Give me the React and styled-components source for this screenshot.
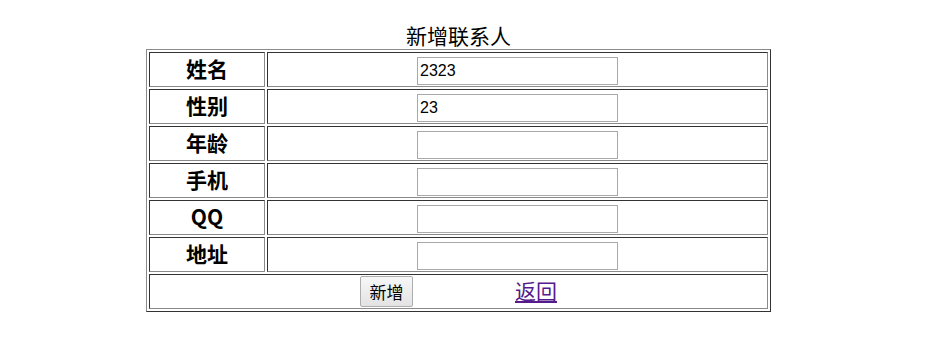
import React from "react";
import styled, { createGlobalStyle } from "styled-components";

const Global = createGlobalStyle`
  html, body { margin: 0; padding: 0; background: #fff; }
  body { font-family: "Noto Sans CJK SC", "Liberation Sans", sans-serif; color: #000; }
`;

const Page = styled.div`
  padding: 21px 0 0 146px;
`;

const Table = styled.table`
  width: 625px;
  table-layout: fixed;
  border-collapse: separate;
  border-spacing: 2px;
  border-style: solid;
  border-width: 1px;
  border-color: #8a8a8a #333 #333 #8a8a8a;
`;

const Caption = styled.caption`
  font-size: 21px;
  line-height: 28px;
  font-weight: 400;
  text-align: center;
`;

const Th = styled.th`
  width: 112px;
  padding: 0 1px 3px;
  border-style: solid;
  border-width: 1px;
  border-color: #333 #8a8a8a #8a8a8a #333;
  font-size: 21px;
  font-weight: 700;
  line-height: 30px;
  height: 30px;
  text-align: center;
  vertical-align: top;
`;

const Td = styled.td`
  padding: 1px;
  border-style: solid;
  border-width: 1px;
  border-color: #333 #8a8a8a #8a8a8a #333;
  height: 31px;
  vertical-align: top;
`;

const Field = styled.input`
  display: block;
  box-sizing: border-box;
  width: 201px;
  height: 28px;
  margin: 3px auto 0;
  padding: 0 2px;
  border: 1px solid #a9a9a9;
  font-family: "Liberation Sans", Arial, sans-serif;
  font-size: 16px;
  color: #000;
  outline: none;
`;

const Actions = styled.div`
  display: flex;
  justify-content: center;
  align-items: flex-start;
  gap: 102px;
  height: 31px;
`;

const Button = styled.button`
  box-sizing: border-box;
  width: 53px;
  height: 31px;
  margin: 0;
  padding: 0;
  border: 1px solid #adadad;
  border-radius: 2px;
  background: linear-gradient(#f7f7f7, #e3e3e3);
  font-family: "Noto Sans CJK SC", sans-serif;
  font-size: 17px;
  line-height: 29px;
  color: #000;
`;

const Link = styled.a`
  display: block;
  font-size: 21px;
  line-height: 28px;
  color: #551a8b;
  text-decoration: underline;
`;

const rows = [
  ["姓名", "2323"],
  ["性别", "23"],
  ["年龄", ""],
  ["手机", ""],
  ["QQ", ""],
  ["地址", ""],
];

export default function App() {
  return (
    <Page>
      <Global />
      <Table>
        <Caption>新增联系人</Caption>
        <tbody>
          {rows.map(([label, value]) => (
            <tr key={label}>
              <Th>{label}</Th>
              <Td>
                <Field type="text" defaultValue={value} />
              </Td>
            </tr>
          ))}
          <tr>
            <Td colSpan={2}>
              <Actions>
                <Button type="button">新增</Button>
                <Link href="#">返回</Link>
              </Actions>
            </Td>
          </tr>
        </tbody>
      </Table>
    </Page>
  );
}
